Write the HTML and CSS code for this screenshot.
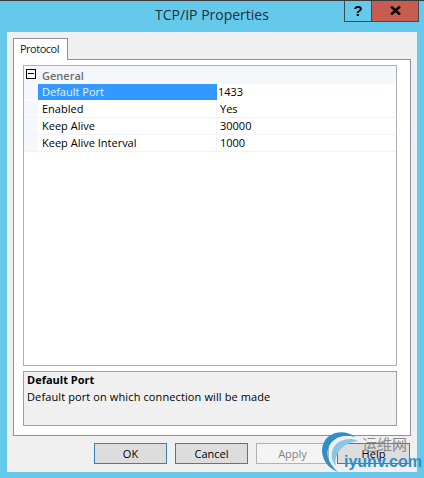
FILE: index.html
```html
<!DOCTYPE html>
<html lang="en">
<head>
  <meta charset="UTF-8" />
  <title>TCP/IP Properties</title>
  <link rel="stylesheet" href="styles.css">
</head>
<body>
  <div class="window">
    <div class="titlebar">
      <span class="title">TCP/IP Properties</span>
      <div class="caption-btns">
        <div class="caption-btn help-btn">?</div>
        <div class="caption-btn close-btn">
          <svg viewBox="0 0 11 9" width="11" height="9"><path d="M1 0.5L5.5 4.5L10 0.5M1 8.5L5.5 4.5L10 8.5" fill="none" stroke="#000" stroke-width="2.4"/></svg>
        </div>
      </div>
    </div>

    <div class="client">
      <div class="tabs">
        <div class="tab">Protocol</div>
      </div>
      <div class="panel">
        <div class="grid">
          <div class="row cat-row">
            <div class="gutter"><span class="toggle"></span></div>
            <div class="cat-name">General</div>
          </div>
          <div class="row selected">
            <div class="gutter"></div>
            <div class="name">Default Port</div>
            <div class="value">1433</div>
          </div>
          <div class="row">
            <div class="gutter"></div>
            <div class="name">Enabled</div>
            <div class="value">Yes</div>
          </div>
          <div class="row">
            <div class="gutter"></div>
            <div class="name">Keep Alive</div>
            <div class="value">30000</div>
          </div>
          <div class="row">
            <div class="gutter"></div>
            <div class="name">Keep Alive Interval</div>
            <div class="value">1000</div>
          </div>
        </div>
        <div class="desc">
          <div class="desc-title">Default Port</div>
          <div class="desc-text">Default port on which connection will be made</div>
        </div>
      </div>
      <div class="buttons">
        <div class="btn default">OK</div>
        <div class="btn">Cancel</div>
        <div class="btn disabled">Apply</div>
        <div class="btn">Help</div>
      </div>
    </div>

    <!-- watermark over the corner -->
    <div class="watermark">
      <svg class="wm-swirl" viewBox="0 0 50 46" width="50" height="46">
        <path d="M33 7C22 -2 1 2 0 20C0 30 6 38 16 42C8 35 4 27 6 19C9 9 20 3 33 7Z" fill="#2f8fc8"/>
        <path d="M36 11C26 6 12 11 10 22C9 29 11 33 14 36C12 28 16 14 36 11Z" fill="#8cc6e6"/>
      </svg>
      <span class="wm-cn">运维网</span>
      <span class="wm-en">iyunv.com</span>
    </div>
  </div>
</body>
</html>
```
FILE: styles.css
```css
* {
  box-sizing: border-box;
}

body {
  margin: 0;
  font-family: 'Open Sans', 'Noto Sans', sans-serif;
  font-size: 11px;
  color: #000;
}

.window {
  position: relative;
  width: 424px;
  height: 478px;
  background: #65c9ec;
  border-top: 1px solid #3a3a3a;
  overflow: hidden;
}

/* Title bar */
.titlebar {
  position: relative;
  height: 30px;
  display: flex;
  justify-content: center;
  align-items: center;
}

.title {
  font-size: 14px;
  color: #1c2f3a;
  padding-bottom: 3px;
}

.caption-btns {
  position: absolute;
  top: -1px;
  left: 344px;
  display: flex;
  height: 22px;
  border: 1px solid #3f4a50;
  border-top: none;
}

.caption-btn {
  display: flex;
  align-items: center;
  justify-content: center;
}

.help-btn {
  width: 27px;
  font-family: 'Liberation Sans', sans-serif;
  font-weight: bold;
  font-size: 15px;
  border-right: 1px solid #3f4a50;
}

.close-btn {
  width: 46px;
  background: #c75c51;
}

/* Client area */
.client {
  margin: 0 7px;
  height: 441px;
  background: #f0f0f0;
  border-top: 1px solid #9ab3c4;
  padding: 6px 6px 0;
}

.tabs {
  display: flex;
  height: 21px;
}

.tab {
  width: 55px;
  height: 22px;
  background: #fff;
  border: 1px solid #8e8f9e;
  border-bottom: none;
  position: relative;
  z-index: 1;
  padding: 2px 0 0 6px;
  letter-spacing: -0.5px;
  color: #0b1a38;
}

.panel {
  width: 398px;
  height: 377px;
  background: #fff;
  border: 1px solid #8e8f9e;
  padding: 5px 13px 0 9px;
  display: flex;
  flex-direction: column;
  gap: 5px;
}

.grid {
  height: 301px;
  border: 1px solid #b0b0b0;
  background: #fff;
}

.row {
  display: flex;
  height: 17px;
  line-height: 15px;
  border-bottom: 1px solid #f0f3f9;
}

.gutter {
  width: 14px;
  background: #f4f7fc;
  flex-shrink: 0;
  display: flex;
  align-items: flex-start;
  padding: 3px 0 0 2px;
}

.toggle {
  position: relative;
  width: 10px;
  height: 10px;
  border: 1px solid #000;
  background: #fff;
}

.toggle::after {
  content: '';
  position: absolute;
  left: 1px;
  top: 3px;
  width: 6px;
  height: 1px;
  background: #000;
}

.cat-row {
  height: 18px;
  background: #f4f7fc;
  border-bottom: none;
  line-height: 19px;
}

.cat-name {
  padding-left: 4px;
  font-weight: 600;
  color: #6d6d6d;
}

.name {
  width: 179px;
  padding-left: 4px;
  border-right: 1px solid #f0f3f9;
}

.value {
  padding-left: 3px;
}

.selected {
  border-bottom-color: #fff;
}

.selected .name {
  background: #3399ff;
  color: #e8f3ff;
  border-right: none;
}

.selected .value {
  padding-left: 1px;
}

/* Description box */
.desc {
  height: 55px;
  background: #f0f0f0;
  border: 1px solid #a0a0a0;
  padding: 0 3px;
  line-height: 16px;
}

.desc-title {
  font-weight: 700;
}

.desc-text {
  margin-top: 1px;
  letter-spacing: 0.11px;
}

/* Bottom buttons */
.buttons {
  display: flex;
  gap: 8px;
  margin-top: 7px;
  padding-left: 81px;
}

.btn {
  width: 73px;
  height: 21px;
  background: #dddddd;
  border: 1px solid #707070;
  display: flex;
  align-items: center;
  justify-content: center;
}

.btn.default {
  border-color: #3c7fb1;
}

.btn.disabled {
  background: #f4f4f4;
  border-color: #adb2b5;
  color: #838383;
}

/* Watermark */
.watermark {
  position: absolute;
  left: 322px;
  top: 429px;
  width: 102px;
  height: 46px;
}

.wm-swirl {
  position: absolute;
  left: 0;
  top: 0;
}

.wm-cn {
  position: absolute;
  left: 40px;
  top: 5px;
  font-family: 'Noto Sans CJK SC', sans-serif;
  font-size: 15px;
  line-height: 17px;
  color: #8a8a8a;
}

.wm-en {
  position: absolute;
  left: 22px;
  top: 22px;
  font-family: 'Liberation Sans', sans-serif;
  font-weight: bold;
  font-size: 16px;
  line-height: 20px;
  color: #2f8fc8;
}
```
